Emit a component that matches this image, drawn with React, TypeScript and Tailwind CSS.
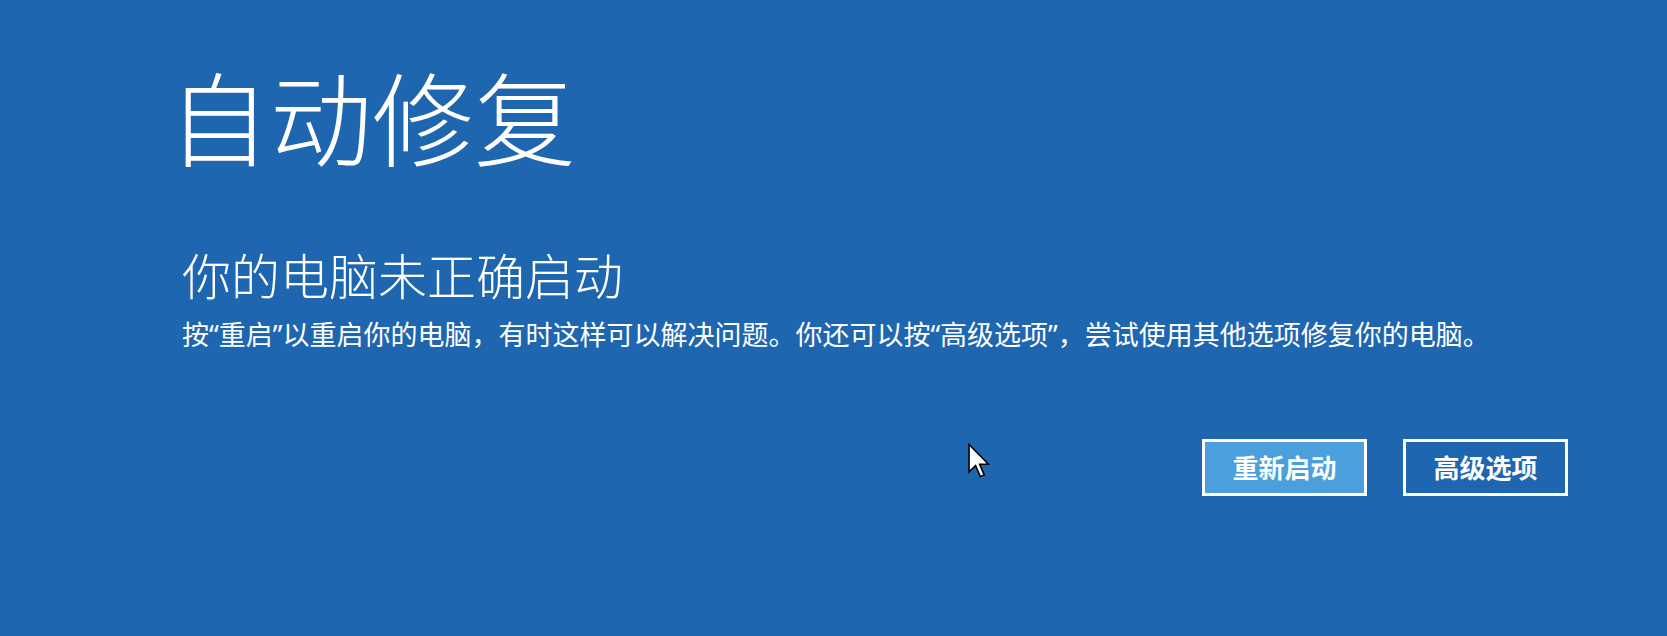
import React from 'react';

const font = { fontFamily: '"Noto Sans", "Noto Sans CJK SC", sans-serif' };

function Cursor() {
  return (
    <svg
      className="absolute left-[968px] top-[443px]"
      width="22"
      height="36"
      viewBox="0 0 12.5 20"
    >
      <path
        d="M0.6 0.6 L0.6 16.2 L4.3 12.6 L7 18.8 L9.2 17.9 L6.6 11.8 L11.6 11.8 Z"
        fill="#ffffff"
        stroke="#000000"
        strokeWidth="0.9"
        strokeLinejoin="miter"
      />
    </svg>
  );
}

export default function App() {
  return (
    <div
      className="relative w-full h-[636px] bg-[#1f66b1] text-white overflow-hidden pl-[182px] pt-[69px]"
      style={font}
    >
      {/* 标题 */}
      <h1 className="-ml-[14px] text-[102px] leading-none font-light">自动修复</h1>

      {/* 说明 */}
      <h2 className="mt-[81px] text-[49px] leading-none font-light">你的电脑未正确启动</h2>
      <p className="mt-[20px] text-[27px] leading-none">
        按“重启”以重启你的电脑，有时这样可以解决问题。你还可以按“高级选项”，尝试使用其他选项修复你的电脑。
      </p>

      {/* 按钮 */}
      <div className="mt-[91px] flex justify-end gap-[36px] pr-[99px]">
        <button className="w-[165px] h-[57px] border-[3px] border-white bg-[#4a9fdc] text-[26px] font-semibold leading-none">
          重新启动
        </button>
        <button className="w-[165px] h-[57px] border-[3px] border-white bg-transparent text-[26px] font-semibold leading-none">
          高级选项
        </button>
      </div>

      <Cursor />
    </div>
  );
}
